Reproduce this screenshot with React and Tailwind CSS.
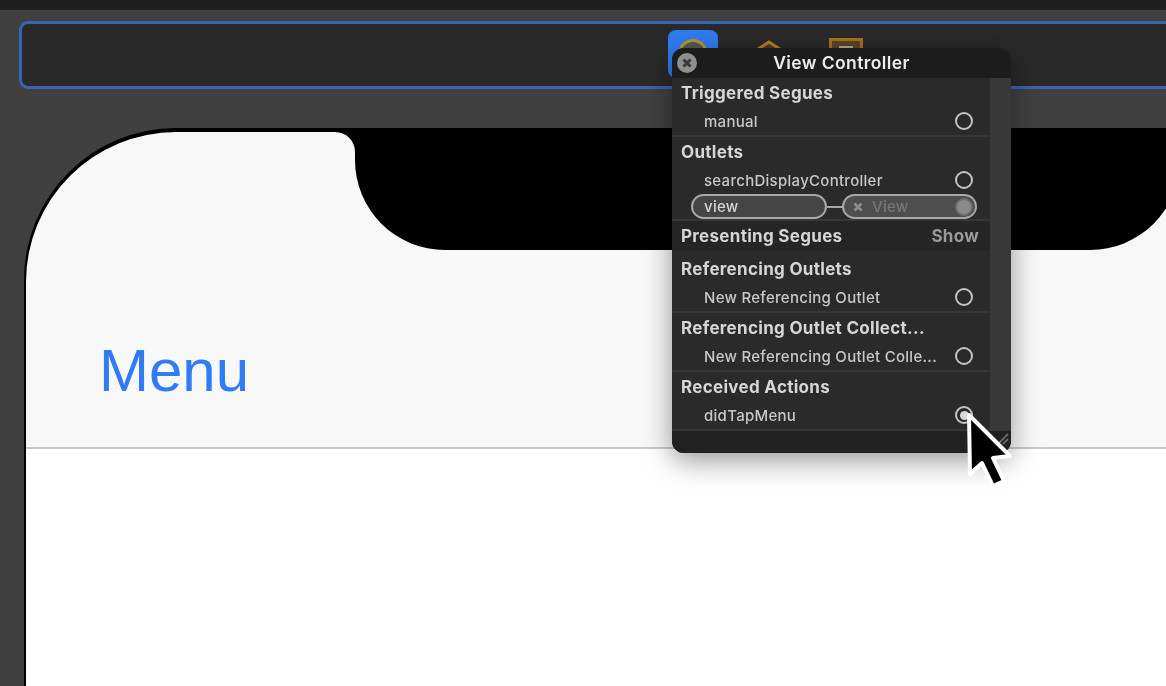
import React from "react";

function Circle() {
  return <span className="w-[18px] h-[18px] rounded-full border-2 border-[#c4c4c4] shrink-0" />;
}

function Header({ children, className = "" }) {
  return (
    <div className={`h-[29px] pl-[9px] pt-[1px] flex items-center text-[17px] tracking-[0.3px] font-bold text-[#d6d6d6] leading-none whitespace-nowrap ${className}`}>
      {children}
    </div>
  );
}

function Row({ label, h = "h-[28px]", dot = false }) {
  return (
    <div className={`${h} pl-[32px] pr-[17px] flex items-center justify-between text-[15px] tracking-[0.28px] font-medium text-[#c8c8c8] leading-none`}>
      <span className="pt-[1px]">{label}</span>
      {dot ? (
        <span className="w-[18px] h-[18px] rounded-full border-2 border-[#c4c4c4] shrink-0 flex items-center justify-center">
          <span className="w-[9px] h-[9px] rounded-full bg-[#d8d8d8]" />
        </span>
      ) : (
        <Circle />
      )}
    </div>
  );
}

function Sep() {
  return <div className="h-[2px] bg-[#363636]" />;
}

function Popover() {
  return (
    <div className="absolute left-[672px] top-[48px] w-[339px] h-[405px] rounded-[12px] overflow-hidden bg-[#2a2a2a] shadow-[0_8px_28px_rgba(0,0,0,0.4)] flex flex-col font-[Inter,sans-serif]">
      <div className="h-[30px] shrink-0 bg-[#1c1c1c] relative flex items-center justify-center">
        <span className="absolute left-[5px] top-[5px] w-[20px] h-[20px] rounded-full bg-[#8f8f8f] flex items-center justify-center">
          <svg width="12" height="12" viewBox="0 0 12 12">
            <path d="M2.5 2.5L9.5 9.5M9.5 2.5L2.5 9.5" stroke="#3a3a3a" strokeWidth="3" />
          </svg>
        </span>
        <span className="text-[17.5px] tracking-[0.4px] font-semibold text-[#ececec] leading-none">View Controller</span>
      </div>
      <div className="flex-1 flex min-h-0">
        <div className="w-[318px] flex flex-col">
          <div className="h-[59px] flex flex-col">
            <Header>Triggered Segues</Header>
            <Row label="manual" />
            <Sep />
          </div>
          <div className="flex flex-col h-[84px]">
            <Header>Outlets</Header>
            <Row label="searchDisplayController" />
            <div className="h-[25px] flex items-center pl-[19px]">
              <div className="w-[136px] h-[25px] rounded-full border-2 border-[#a8a8a8] bg-[#454545] flex items-center pl-[11px] text-[15px] tracking-[0.28px] font-medium text-[#d4d4d4] leading-none">
                view
              </div>
              <div className="w-[15px] h-[2px] bg-[#a8a8a8]" />
              <div className="w-[135px] h-[25px] rounded-full border-2 border-[#a8a8a8] bg-[#4e4e4e] flex items-center pl-[9px] pr-[2px] text-[15px] tracking-[0.28px] font-medium text-[#777777] leading-none">
                <svg width="10" height="10" viewBox="0 0 10 10" className="mr-[9px] shrink-0">
                  <path d="M1.5 1.5L8.5 8.5M8.5 1.5L1.5 8.5" stroke="#8c8c8c" strokeWidth="2.6" />
                </svg>
                <span className="flex-1">View</span>
                <span className="w-[18px] h-[18px] rounded-full border-2 border-[#6e6e6e] bg-[#8a8a8a]" />
              </div>
            </div>
            <Sep />
          </div>
          <div className="h-[30px] bg-[#252525] pl-[9px] pr-[11px] flex items-center justify-between text-[17px] tracking-[0.3px] font-bold leading-none">
            <span className="text-[#d6d6d6]">Presenting Segues</span>
            <span className="text-[#9a9a9a]">Show</span>
          </div>
          <div className="h-[62px] flex flex-col pt-[3px]">
            <Header>Referencing Outlets</Header>
            <Row label="New Referencing Outlet" />
            <Sep />
          </div>
          <div className="h-[59px] flex flex-col">
            <Header>Referencing Outlet Collect...</Header>
            <Row label="New Referencing Outlet Colle..." />
            <Sep />
          </div>
          <div className="h-[59px] flex flex-col">
            <Header>Received Actions</Header>
            <Row label="didTapMenu" dot />
            <Sep />
          </div>
        </div>
        <div className="flex-1 bg-[#383838]" />
      </div>
      <div className="h-[22px] shrink-0 bg-[#212121] relative">
        <svg width="14" height="14" viewBox="0 0 14 14" className="absolute right-[2px] top-[0px]">
          <path d="M3 13L13 3M8 13L13 8" stroke="#7a7a7a" strokeWidth="1.5" />
        </svg>
      </div>
    </div>
  );
}

function Cursor() {
  return (
    <svg width="56" height="88" viewBox="0 0 56 88" className="absolute left-[962px] top-[408px]">
      <path
        d="M7 7L8 66L20 55L31 78L42 73L31 50L48 48Z"
        fill="#000000"
        stroke="#ffffff"
        strokeWidth="4"
        strokeLinejoin="round"
      />
    </svg>
  );
}

export default function App() {
  return (
    <div className="relative h-[686px] w-[1166px] overflow-hidden bg-[#404040] flex flex-col blur-[0.5px]">
      <div className="h-[10px] shrink-0 bg-[#1f1f1f]" />
      <div className="h-[68px] shrink-0 mt-[11px] ml-[19px] mr-[-12px] rounded-[9px] border-[3px] border-[#3565b4] bg-[#292929] flex items-start pl-[646px] pt-[6px]">
        <div className="w-[50px] h-[48px] rounded-[8px] bg-[#2f7bf0] flex justify-center pt-[9px] shrink-0">
          <span className="w-[30px] h-[30px] rounded-full border-[3px] border-[#b5962e] bg-[#555555]" />
        </div>
        <svg width="32" height="20" viewBox="0 0 32 20" className="ml-[35px] mt-[10px] shrink-0">
          <path d="M2 11L16 2L30 11V20H2Z" fill="#4a3d28" stroke="#b87a28" strokeWidth="3" />
        </svg>
        <div className="ml-[44px] mt-[8px] w-[34px] h-[24px] border-[3px] border-[#a8701c] bg-[#5a4526] flex justify-center pt-[5px] shrink-0">
          <span className="w-[14px] h-[8px] bg-[#b0a898]" />
        </div>
      </div>
      <div className="flex-1 min-h-0 mt-[39px] ml-[24px] mr-[-100px] rounded-tl-[152px] bg-black pl-[2px] pt-[4px] flex flex-col">
        <div className="h-[317px] shrink-0 flex border-b-2 border-[#c9c9c9]">
          <div className="w-[329px] shrink-0 bg-[#f8f8f8] rounded-tl-[150px] rounded-tr-[20px] pl-[73px] pt-[209px] text-[60px] leading-none text-[#2f7cf6] font-['Liberation_Sans',Arial,sans-serif]">
            Menu
          </div>
          <div className="w-[825px] shrink-0 bg-[#f8f8f8]">
            <div className="h-[118px] bg-black rounded-b-[90px]" />
          </div>
        </div>
        <div className="flex-1 bg-white" />
      </div>
      <Popover />
      <Cursor />
    </div>
  );
}
